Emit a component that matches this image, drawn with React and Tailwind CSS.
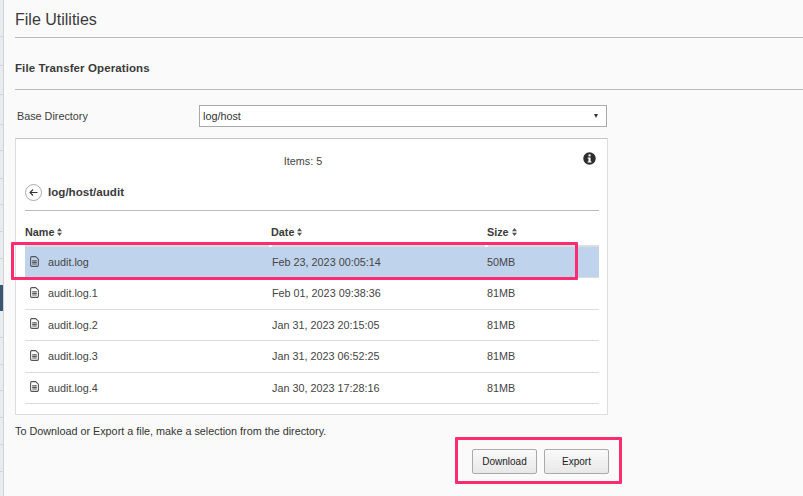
const files = [
  ["audit.log", "Feb 23, 2023 00:05:14", "50MB", true],
  ["audit.log.1", "Feb 01, 2023 09:38:36", "81MB"],
  ["audit.log.2", "Jan 31, 2023 20:15:05", "81MB"],
  ["audit.log.3", "Jan 31, 2023 06:52:25", "81MB"],
  ["audit.log.4", "Jan 30, 2023 17:28:16", "81MB"],
];

function Sort() {
  return (
    <svg width="5" height="8" viewBox="0 0 5 8" className="ml-[3px] shrink-0">
      <path d="M2.5 0L5 3.2H0Z M2.5 8L0 4.8H5Z" fill="#555" />
    </svg>
  );
}

function FileIcon() {
  return (
    <svg width="9" height="11" viewBox="0 0 9 11" fill="none" stroke="#555" strokeWidth="1.1">
      <path d="M1.8.6H5.6L8.4 3.2V9A1.4 1.4 0 0 1 7 10.4H1.9A1.4 1.4 0 0 1 .6 9V1.9A1.4 1.4 0 0 1 1.8.6Z" />
      <path d="M2.2 4.8H6.8M2.2 6.4H6.8M2.2 8H6.8" />
    </svg>
  );
}

export default function App() {
  return (
    <div className="relative flex h-[496px] w-[803px] overflow-hidden bg-[#fafafa] text-[#333] font-['Liberation_Sans',Arial,sans-serif]">
      <div className="flex w-[4px] shrink-0 flex-col border-r border-[#d0d3d6] bg-[#e9ecef]">
        <div className="h-[37px] shrink-0 border-b border-[#cfd8e0]" />
        <div className="h-[29px] shrink-0 border-b border-[#cfd8e0]" />
        <div className="h-[29px] shrink-0 border-b border-[#cfd8e0]" />
        <div className="h-[30px] shrink-0 border-b border-[#cfd8e0]" />
        <div className="h-[26px] shrink-0 border-b border-[#cfd8e0]" />
        <div className="h-[28px] shrink-0 border-b border-[#cfd8e0]" />
        <div className="h-[26px] shrink-0 border-b border-[#cfd8e0]" />
        <div className="h-[27px] shrink-0 border-b border-[#cfd8e0]" />
        <div className="h-[27px] shrink-0 border-b border-[#cfd8e0]" />
        <div className="h-[26px] shrink-0" />
        <div className="h-[26px] shrink-0 bg-[#3d5670]" />
        <div className="h-[27px] shrink-0 border-b border-[#cfd8e0]" />
        <div className="h-[27px] shrink-0 border-b border-[#cfd8e0]" />
        <div className="h-[26px] shrink-0 border-b border-[#cfd8e0]" />
        <div className="h-[27px] shrink-0 border-b border-[#cfd8e0]" />
        <div className="h-[27px] shrink-0 border-b border-[#cfd8e0]" />
        <div className="h-[27px] shrink-0 border-b border-[#cfd8e0]" />
      </div>

      <main className="flex-1 pl-[11px]">
        <h1 className="flex h-[38px] items-center border-b border-[#bbb] pt-[3px] text-[16px] font-normal text-[#3a3a3a]">
          File Utilities
        </h1>
        <h2 className="flex h-[52px] items-center border-b border-[#bbb] pt-[10px] text-[11.5px] font-bold tracking-[0.1px] text-[#3a3a3a]">
          File Transfer Operations
        </h2>

        <div className="mt-[15px] flex h-[22px] items-center">
          <label className="w-[184px] pl-[2px] text-[10.8px] text-[#3d3d3d]">Base Directory</label>
          <div className="flex h-[22px] w-[408px] items-center justify-between border border-[#aaa] bg-white pl-[3px] pr-[8px] text-[10.8px] text-[#333]">
            <span>log/host</span>
            <span className="h-0 w-0 border-x-[2px] border-t-[4px] border-x-transparent border-t-[#333]" />
          </div>
        </div>

        <section className="mt-[11px] h-[277px] w-[593px] border border-[#ddd] border-t-[#c4c4c4] bg-white pl-[9px] pr-[8px]">
          <div className="relative flex h-[42px] items-center justify-center pr-[18px] pt-[2px] text-[10.8px] text-[#444]">
            Items: 5
            <svg width="13" height="13" viewBox="0 0 13 13" className="absolute right-[3px] top-[13px]">
              <circle cx="6.5" cy="6.5" r="6.2" fill="#2e2e2e" />
              <rect x="5.5" y="2.4" width="2.1" height="2" fill="#fff" />
              <path d="M4.6 5.4H7.6V9.4H8.5V10.6H4.6V9.4H5.5V6.6H4.6Z" fill="#fff" />
            </svg>
          </div>

          <div className="flex h-[30px] items-center gap-[6px] border-b border-[#bbb] pb-[7px]">
            <svg width="17" height="17" viewBox="0 0 17 17" fill="none">
              <circle cx="8.5" cy="8.5" r="8" stroke="#aaa" />
              <path d="M12.5 8.5H5M8 5.5L5 8.5L8 11.5" stroke="#333" strokeWidth="1.1" />
            </svg>
            <span className="text-[11.6px] font-bold text-[#3a3a3a]">log/host/audit</span>
          </div>

          <div className="flex h-[36px] items-center border-b-[2px] border-[#ddd] pt-[8px] text-[10.8px] font-bold text-[#3a3a3a]">
            <div className="flex w-[246px] items-center">Name<Sort /></div>
            <div className="flex w-[216px] items-center">Date<Sort /></div>
            <div className="flex items-center">Size<Sort /></div>
          </div>

          {files.map(([name, date, size, selected]) => (
            <div
              key={name}
              className={`relative flex h-[31.4px] items-center border-b border-[#dcdcdc] text-[10.8px] text-[#444] ${selected ? "bg-[#c0d3ec]" : ""}`}
            >
              {selected && <span className="absolute left-[244px] top-[-2px] h-[2px] w-[3px] bg-white" />}
              {selected && <span className="absolute left-[460px] top-[-2px] h-[2px] w-[3px] bg-white" />}
              <div className="flex w-[247px] items-center">
                <span className="ml-[5px] mb-[2px] flex w-[18px]"><FileIcon /></span>
                <span>{name}</span>
              </div>
              <div className="w-[215px]">{date}</div>
              <div>{size}</div>
            </div>
          ))}
        </section>

        <p className="mt-[8px] text-[10.8px] text-[#333]">To Download or Export a file, make a selection from the directory.</p>

        <div className="mt-[10px] flex w-[594px] justify-end gap-[7px]">
          <button className="h-[25px] w-[65px] rounded-[2px] border border-[#aaa] bg-gradient-to-b from-[#fafafa] to-[#e8e8e8] text-[10px] text-[#222]">Download</button>
          <button className="h-[25px] w-[65px] rounded-[2px] border border-[#aaa] bg-gradient-to-b from-[#fafafa] to-[#e8e8e8] text-[10px] text-[#222]">Export</button>
        </div>
      </main>

      <div className="pointer-events-none absolute left-[11px] top-[242px] h-[38px] w-[567px] rounded-[1px] border-[3px] border-[#fb2c6f]" />
      <div className="pointer-events-none absolute left-[455px] top-[437px] h-[47px] w-[167px] rounded-[1px] border-[3px] border-[#fb2c6f]" />
    </div>
  );
}
